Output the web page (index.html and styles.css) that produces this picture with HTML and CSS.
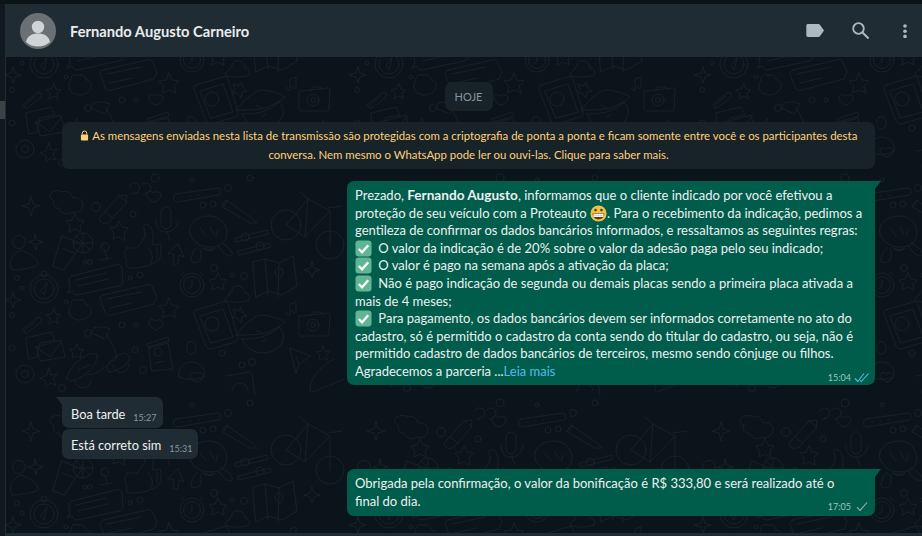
FILE: index.html
```html
<!DOCTYPE html>
<html lang="pt-BR">
<head>
    <meta charset="UTF-8">
    <title>WhatsApp</title>
    <link rel="stylesheet" href="styles.css">
</head>
<body>
    <div class="app">
        <div class="side-strip"><span class="scroll-mark"></span></div>
        <div class="chat">
            <header class="chat-header">
                <svg class="avatar" viewBox="0 0 36 36">
                    <circle cx="18" cy="18" r="18" fill="#6a7175"/>
                    <circle cx="18" cy="14" r="6.200" fill="#cfd4d6"/>
                    <path d="M6 29c1-6 6-8.500 12-8.500S29 23 30 29a18 18 0 0 1-24 0z" fill="#cfd4d6"/>
                </svg>
                <span class="contact-name">Fernando Augusto Carneiro</span>
                <div class="header-icons">
                    <svg class="icon icon-tag" viewBox="0 0 18 13" width="18" height="13"><path d="M2 0h10.500c.6 0 1.100.3 1.400.7L18 6.500l-4.100 5.800c-.3.4-.8.700-1.400.7H2c-1 0-1.700-.7-1.700-1.700V1.700C.3.700 1 0 2 0z" fill="#aebac1"/></svg>
                    <svg class="icon icon-search" viewBox="0 0 17 17" width="17" height="17"><circle cx="6.500" cy="6.500" r="5.300" fill="none" stroke="#aebac1" stroke-width="1.800"/><path d="M10.500 10.500L16.500 16.500" stroke="#aebac1" stroke-width="2" fill="none"/></svg>
                    <svg class="icon" viewBox="0 0 4 14" width="4" height="14"><circle cx="2" cy="2" r="1.800" fill="#aebac1"/><circle cx="2" cy="7.200" r="1.800" fill="#aebac1"/><circle cx="2" cy="12.400" r="1.800" fill="#aebac1"/></svg>
                </div>
            </header>

            <main class="messages">
                <svg class="doodles" width="100%" height="100%">
                    <defs>
                        <pattern id="doodle" x="-6" y="113" width="345" height="225" patternUnits="userSpaceOnUse">
                            <g fill="none" stroke="#162027" stroke-width="1" stroke-linejoin="round" stroke-linecap="round">
                                <!-- cloud, sparkle -->
                                <path d="M52 22c-4 3-2 8 2 8-2 5 1 9 5 8 2 6 9 7 13 4 4 2 11-1 11-7 0-6-6-8-10-7-1-5-6-8-10-6-3-2-8-2-11 0z"/>
                                <path d="M31 27l2 7 7 2-7 2-2 8-2-8-7-2 7-2z"/>
                                <!-- pencil -->
                                <path d="M101 46l18-20 8 6-18 20c-3 2-7 2-9-1-1-2-1-3 1-5zM119 26l8-1-1 7M105 42l8 6"/>
                                <!-- quotes, heart, pill -->
                                <path d="M130 16a5 5 0 1 1 4 7c2 0 0 2-2 1M142 15a5 5 0 1 1 4 8c0 1-1 1-2 1"/>
                                <path d="M154 32c-3-1-7-4-7-7 0-4 4-5 6-2 2-2 8-2 8 2 0 3-4 6-7 7z"/>
                                <path d="M176 24l42-6c3 0 4 6 1 7l-42 7c-4 0-5-7-1-8zM182 27h1M190 26h1M198 25h1"/>
                                <circle cx="96" cy="37" r="4.500"/><circle cx="133" cy="44" r="3"/><circle cx="155" cy="8" r="4"/><circle cx="228" cy="18" r="3.500"/><circle cx="203" cy="35" r="3"/><circle cx="213" cy="34" r="3"/>
                                <!-- mic -->
                                <path d="M161 42a5 5 0 0 1 10 0v12a5 5 0 0 1-10 0zM156 50c0 8 4 12 10 12s11-4 12-11M167 62l3 8"/>
                                <!-- pencil 2 -->
                                <path d="M222 36l4-6 26 18 5 5-7 0-24-14z M228 30l-4 6"/>
                                <!-- stars -->
                                <path d="M75 44l3 6 6 1-4 5 1 6-6-3-6 3 1-6-4-5 6-1z"/>
                                <path d="M119 51l3 6 6 1-4 5 1 7-6-3-6 2 1-6-4-5 6-1z"/>
                                <!-- thumb -->
                                <path d="M127 78h10l5-7c3-3 4-8 2-13-2-4 6-6 8 2 2 6 1 11 0 15l8-1c2 4 1 14-2 17l-11 5-10 2h-9c-2-3-2-6-1-8-3-2-3-8 0-12zM148 78c4 4 6 10 3 15M157 76v13"/>
                                <!-- person -->
                                <circle cx="19" cy="72" r="6.500"/>
                                <path d="M21 80c5 3 16 5 17 14 0 3-16 6-26 6-3-6-2-13 5-18z"/>
                                <path d="M35 64l2 6 6 2-6 2-1 6-2-6-6-2 6-2z"/>
                                <!-- drink -->
                                <path d="M62 66l20 8-18 26-11-4zM62 78l12 5"/><circle cx="83" cy="73" r="10"/><path d="M83 63v20M73 73h20M76 66l14 14"/>
                                <!-- glass -->
                                <circle cx="105" cy="77" r="4"/><path d="M105 81l2 8M100 90l11-2"/>
                                <!-- face -->
                                <path d="M190 57c2-7 11-11 19-11 9 0 15 5 17 12 3 7-1 15-8 18-8 2-16 1-21-3-5-4-9-9-7-16zM200 58l6 8M210 57l4 7M218 60l-2 6"/>
                                <path d="M197 78c-4 2-6 8-6 13 2 3 7 2 9-1 2-4 1-8 0-11M218 75c3 6 8 11 13 11 2-1 1-5-1-7-3-3-6-5-9-6M203 78c4 2 8 2 12 0-1 3-9 4-12 0z"/>
                                <!-- arrow -->
                                <path d="M178 74l6 13-5-2-1 9-5 0 1-10-6 0z"/>
                                <!-- sliders -->
                                <path d="M235 68l32-8 1 4-32 8zM238 81l32-8 1 4-32 8z"/>
                                <circle cx="245" cy="67" r="4"/><circle cx="260" cy="76" r="4"/>
                                <circle cx="250" cy="8" r="3"/><circle cx="214" cy="98" r="3.500"/><circle cx="244" cy="106" r="3.500"/><circle cx="232" cy="105" r="2"/><circle cx="192" cy="10" r="2"/><circle cx="140" cy="105" r="3"/><circle cx="130" cy="108" r="2"/>
                                <circle cx="90" cy="92" r="2.500"/><circle cx="85" cy="92" r="2"/><circle cx="17" cy="108" r="2.500"/><circle cx="22" cy="118" r="2"/><circle cx="12" cy="145" r="2.500"/><circle cx="66" cy="132" r="2"/>
                                <!-- bike -->
                                <circle cx="286" cy="55" r="15"/><circle cx="330" cy="75" r="14"/>
                                <path d="M286 55l22-26 22 12 0 34M308 29l-3 38 25-26M286 55l19 12M300 22l8 7M328 38l14-2"/>
                                <!-- map -->
                                <path d="M253 92l12-3 14 4 14-7 4 30-15 9-14-4-12 6zM265 89l3 36M279 93l-1 34"/><path d="M275 102a4 4 0 0 1 8 0c0 3-4 7-4 7s-4-4-4-7z"/>
                                <!-- chat bubbles -->
                                <path d="M72 106l43-11c4-1 6 0 7 3l1 13c0 3-1 4-4 5l-42 9c-3 0-4-2-5-4l-5 2 3-5c-1-3-1-6-1-8 0-2 1-3 3-4zM76 110l30-7M78 116l30-7"/>
                                <path d="M103 125l44-10c3-1 5 0 6 3l4 9-3 7-42 11c-3 1-6 0-7-3l-5-13c0-2 1-3 3-4zM107 129l34-7M110 138l22-5"/>
                                <!-- compass -->
                                <circle cx="44" cy="119" r="14"/><circle cx="44" cy="119" r="10"/><circle cx="44" cy="104" r="3"/><path d="M47 113l-3 12-3-4z"/>
                                <!-- sparkle, clock, cloud -->
                                <path d="M13 122l2 6 6 2-6 2-2 6-2-6-7-2 7-2z"/>
                                <circle cx="192" cy="115" r="12"/><circle cx="192" cy="115" r="8.500"/><path d="M192 110v6l-3 3M184 102l-3 3M200 102l3 3"/>
                                <path d="M229 125c-5 3-5 6-1 6 3 2 18 1 21-1 2-4-1-7-4-7 0-4-4-8-9-7-3 0-4 3-4 5-1 0-2 2-3 4z"/>
                                <path d="M169 128l3 7 7 1-5 5 2 7-7-3-7 3 2-7-5-5 7-1z" />
                                <path d="M218 103l3 6 6 1-4 4 1 6-6-3-6 3 1-6-4-4 6-1z"/>
                                <path d="M312 92l2 6 6 2-6 2-2 6-2-6-6-2 6-2z"/>
                                <path d="M78 130c-5-2-8 2-7 6-4 2-2 12 4 13 6 3 14-1 16-6 2-5-2-8-5-8 0-3-3-6-8-5z"/>
                                <!-- phone -->
                                <path d="M196 140l27-8c2-1 4 0 5 2l10 33c0 2-1 4-3 5l-24 7c-2 0-4-1-5-3l-12-32c0-2 0-3 2-4zM200 146l23-7 10 28-22 6z"/>
                                <circle cx="212" cy="154" r="7"/>
                                <!-- lips -->
                                <path d="M236 165c6-7 13-16 24-20 9 0 19 3 25 7-6 6-12 7-16 10-8 3-22 3-33 3zM242 169c10 0 24 0 37-12 8 8 5 20-9 25-10 3-23-1-28-13zM256 160l6 3M262 172l4-3"/>
                                <!-- note, star, camera -->
                                <path d="M290 143l0-9 6-2 0 9M290 142a2 2 0 1 1-3 0M296 140a2 2 0 1 1-3 0"/>
                                <path d="M241 138l2 5 4 3-5 1-1 6-4-5-5 0 3-4-2-5 5 2z"/>
                                <path d="M302 146l26-3c2 0 2 1 2 3l-1 17c0 2-1 3-3 3l-24 0c-2 0-3-1-3-3l0-17zM310 146l3-4h8l2 3"/><circle cx="313" cy="155" r="6"/><circle cx="313" cy="155" r="2.500"/>
                                <!-- paperclip, stars -->
                                <path d="M22 160l15-12c4-2 6 2 3 5l-13 10c-3 1-4-1-2-3l10-8"/>
                                <path d="M54 139l2 5 5 1-4 3 1 6-4-3-5 3 1-6-4-3 5-1z"/>
                                <!-- envelope -->
                                <path d="M26 168l25-6 4 8-15 3-3 14-8 2zM36 177l25-7 4 17-24 4zM36 177l14 10 12-16"/>
                                <!-- scooter -->
                                <path d="M94 158l-3 5 14 6 5-10-6-2zM106 163c6 10 9 17 11 25l-20 15-10 2M67 208c2-10 10-18 22-24l8 0c1 10-8 20-22 26-3 2-7 1-8-2zM78 200l12-5"/>
                                <path d="M107 198c1-8 10-14 19-15l4 5c-2 7-12 13-21 14zM113 195a8 8 0 1 0 16-1"/><path d="M75 210a8 8 0 0 0 16 0"/>
                                <!-- jar, heart -->
                                <path d="M149 178l19-5 5 26-21 2zM147 174l21-7 1 4-21 6z"/><circle cx="158" cy="182" r="4"/><path d="M155 193l9-2"/>
                                <path d="M156 160c-3-1-7-4-7-7 0-4 4-5 6-2 2-2 8-2 8 2 0 3-4 6-7 7z"/>
                                <!-- head, heart -->
                                <path d="M189 172c4-2 7 2 7 6 0 4-3 7-6 6-3-1-5-9-1-12z"/>
                                <path d="M179 207c-2-9 5-15 13-15s14 7 12 15c-7 3-18 3-25 0z"/><path d="M197 212c-3-1-7-3-7-6 0-4 4-4 6-2 2-2 7-2 7 2 0 3-3 5-6 6z"/>
                                <!-- gear, star -->
                                <circle cx="25" cy="204" r="9"/><circle cx="25" cy="204" r="3.500"/>
                                <path d="M49 198l2 7 6-1-4 5 3 6-6-2-4 4 0-6-6-3 6-2z"/>
                                <path d="M77 174l2 5 5 1-4 3 1 5-4-2-5 2 1-5-4-3 5-1z"/>
                                <path d="M290 178l21 8-12 8-3 9zM299 194l-3-7"/>
                                <path d="M323 176l2 5 5 1-4 3 1 5-4-2-4 2 1-5-4-3 5-1z"/>
                                <path d="M310 222c-1-14 10-25 24-33M330 215l15-6M312 222l16-6"/>
                                <path d="M226 206l23-4c2 0 2 2 3 3l3 20M232 222a8 8 0 0 1 16-2"/>
                                <circle cx="252" cy="192" r="3.500"/><circle cx="222" cy="183" r="3"/><circle cx="242" cy="195" r="3"/><circle cx="143" cy="200" r="3.500"/><circle cx="135" cy="180" r="3"/><circle cx="88" cy="163" r="3.500"/><circle cx="122" cy="155" r="3"/><circle cx="136" cy="155" r="2"/><circle cx="12" cy="178" r="3"/><circle cx="62" cy="218" r="3.500"/>
                            </g>
                        </pattern>
                    </defs>
                    <rect width="100%" height="100%" fill="url(#doodle)"/>
                </svg>

                <div class="date-row"><span class="date-chip">HOJE</span></div>

                <div class="notice">
                    <svg class="lock" viewBox="0 0 10 12" width="9" height="11"><path d="M2.500 5V3.500a2.500 2.500 0 0 1 5 0V5" fill="none" stroke="#ffd279" stroke-width="1.100"/><rect x="1" y="5" width="8" height="6.500" rx="1" fill="#ffd279"/></svg>
                    As mensagens enviadas nesta lista de transmissão são protegidas com a criptografia de ponta a ponta e ficam somente entre você e os participantes desta<br>
                    conversa. Nem mesmo o WhatsApp pode ler ou ouvi-las. Clique para saber mais.
                </div>

                <div class="bubble bubble-out tail-out first-out">
                    <div class="bubble-text">
                        Prezado, <strong>Fernando Augusto</strong>, informamos que o cliente indicado por você efetivou a<br>
                        proteção de seu veículo com a Proteauto <svg class="emoji emoji-face" viewBox="0 0 20 20"><circle cx="10" cy="10" r="9.500" fill="#f0c24a"/><circle cx="6.500" cy="6" r="1.500" fill="#4d3a12"/><circle cx="13.500" cy="6" r="1.500" fill="#4d3a12"/><path d="M3 10h14c0 4-3 7-7 7s-7-3-7-7z" fill="#5b3a14"/><path d="M4 10.500h12v3.600H4z" fill="#fff"/><path d="M4 12.300h12M7 10.500v3.600M10 10.500v3.600M13 10.500v3.600" stroke="#b9a98a" stroke-width=".5"/></svg>. Para o recebimento da indicação, pedimos a<br>
                        gentileza de confirmar os dados bancários informados, e ressaltamos as seguintes regras:<br>
                        <svg class="emoji"><use href="#check-box"/></svg> O valor da indicação é de 20% sobre o valor da adesão paga pelo seu indicado;<br>
                        <svg class="emoji"><use href="#check-box"/></svg> O valor é pago na semana após a ativação da placa;<br>
                        <svg class="emoji"><use href="#check-box"/></svg> Não é pago indicação de segunda ou demais placas sendo a primeira placa ativada a<br>
                        mais de 4 meses;<br>
                        <svg class="emoji"><use href="#check-box"/></svg> Para pagamento, os dados bancários devem ser informados corretamente no ato do<br>
                        cadastro, só é permitido o cadastro da conta sendo do titular do cadastro, ou seja, não é<br>
                        permitido cadastro de dados bancários de terceiros, mesmo sendo cônjuge ou filhos.<br>
                        Agradecemos a parceria ...<a class="read-more" href="#">Leia mais</a>
                    </div>
                    <div class="meta">
                        <span>15:04</span>
                        <svg viewBox="0 0 16 11" width="16" height="11"><path d="M1 6.500l2.800 3L10 1.500M6.300 8.500l1 1L14.500 1.500" fill="none" stroke="#53bdeb" stroke-width="1.100"/></svg>
                    </div>
                </div>

                <div class="bubble bubble-in tail-in first-in">
                    <span>Boa tarde</span><span class="time-in">15:27</span>
                </div>
                <div class="bubble bubble-in second-in">
                    <span>Está correto sim</span><span class="time-in">15:31</span>
                </div>

                <div class="bubble bubble-out tail-out last-out">
                    <div class="bubble-text">
                        Obrigada pela confirmação, o valor da bonificação é R$ 333,80 e será realizado até o<br>
                        final do dia.
                    </div>
                    <div class="meta">
                        <span>17:05</span>
                        <svg viewBox="0 0 16 11" width="16" height="11"><path d="M3 6l3 3.500L13 1.500" fill="none" stroke="#9db5ad" stroke-width="1.100"/></svg>
                    </div>
                </div>
            </main>
            <div class="footer-edge"></div>
        </div>
    </div>

    <svg class="sprite" width="0" height="0">
        <symbol id="check-box" viewBox="0 0 18 18">
            <rect x=".5" y=".5" width="17" height="17" rx="3.500" fill="#62b594"/>
            <path d="M4 9.500l3.500 3.500L14 5.500" fill="none" stroke="#fff" stroke-width="2.400"/>
        </symbol>
    </svg>
</body>
</html>
```

FILE: styles.css
```css
* {
    box-sizing: border-box;
}

html, body {
    margin: 0;
    height: 100%;
    overflow: hidden;
}

body {
    font-family: 'Lato', 'Open Sans', sans-serif;
    background-color: #0b1418;
    color: #eef1f2;
    font-size: 13px;
}

.sprite {
    display: block;
}

.app {
    display: flex;
    height: 536px;
    padding-top: 4px;
}

.side-strip {
    width: 6px;
    flex-shrink: 0;
    padding-top: 97px;
    background-color: #10191f;
    border-right: 1px solid #222d33;
}

.scroll-mark {
    display: block;
    width: 5px;
    height: 18px;
    background-color: #3b4347;
}

.chat {
    flex: 1;
    display: flex;
    flex-direction: column;
    min-width: 0;
}

.chat-header {
    height: 53px;
    flex-shrink: 0;
    display: flex;
    align-items: center;
    padding: 0 15px 0 14px;
    background-color: #202c33;
}

.avatar {
    width: 36px;
    height: 36px;
    flex-shrink: 0;
}

.contact-name {
    margin-left: 14px;
    font-size: 14.700px;
    font-weight: 700;
    color: #e9edef;
}

.header-icons {
    margin-left: auto;
    display: flex;
    align-items: center;
}

.icon-tag {
    margin-right: 28px;
}

.icon-search {
    margin-right: 34px;
}

.messages {
    position: relative;
    flex: 1;
    display: flex;
    flex-direction: column;
    padding: 25px 47px 0 56px;
    background-color: #0b141a;
}

.doodles {
    position: absolute;
    top: 0;
    left: 0;
}

.date-row,
.notice,
.bubble {
    position: relative;
}

.date-row {
    display: flex;
    justify-content: center;
    height: 29px;
}

.date-chip {
    width: 48px;
    display: flex;
    align-items: center;
    justify-content: center;
    border-radius: 7px;
    background-color: #182229;
    color: #8696a0;
    font-size: 11px;
}

.notice {
    margin-top: 11px;
    height: 47px;
    padding-top: 5px;
    border-radius: 7px;
    background-color: #182229;
    color: #ffd279;
    font-size: 11.420px;
    line-height: 18.500px;
    text-align: center;
    white-space: nowrap;
}

.lock {
    vertical-align: -1px;
    margin-right: 1px;
}

.bubble {
    border-radius: 7px;
    white-space: nowrap;
}

.bubble-out {
    align-self: flex-end;
    width: 528px;
    padding: 6px 8px 0;
    background-color: #005c4b;
}

.first-out {
    margin-top: 12px;
    height: 204px;
}

.last-out {
    margin-top: 10px;
    height: 47px;
}

.bubble-text {
    line-height: 17.600px;
}

.bubble-text strong {
    font-size: 13.600px;
    font-weight: 700;
}

.emoji {
    width: 17px;
    height: 17px;
    margin-right: 3px;
    vertical-align: -4px;
}

.emoji-face {
    margin-right: 0;
}

.read-more {
    color: #53bdeb;
    text-decoration: none;
}

.meta {
    display: flex;
    justify-content: flex-end;
    align-items: center;
    gap: 3px;
    margin-top: -9px;
    margin-right: -3px;
    font-size: 9px;
    color: #a3c4bb;
}

.bubble-in {
    align-self: flex-start;
    display: flex;
    align-items: flex-end;
    height: 30px;
    padding: 0 6px 5px 9px;
    background-color: #202c33;
}

.bubble-in span:first-child {
    font-size: 12.800px;
    line-height: 20px;
    margin-bottom: -1px;
}

.first-in {
    margin-top: 12px;
    height: 31px;
}

.second-in {
    margin-top: 1px;
}

.time-in {
    margin-left: 8px;
    font-size: 9px;
    color: #8696a0;
}

.tail-out::after,
.tail-in::before {
    content: "";
    position: absolute;
    top: 0;
    width: 0;
    height: 0;
    border-top: 8px solid;
}

.tail-out {
    border-top-right-radius: 0;
}

.tail-out::after {
    left: 100%;
    border-top-color: #005c4b;
    border-right: 6px solid transparent;
}

.tail-in {
    border-top-left-radius: 0;
}

.tail-in::before {
    right: 100%;
    border-top-color: #202c33;
    border-left: 6px solid transparent;
}

.footer-edge {
    height: 3px;
    flex-shrink: 0;
    background-color: #202c33;
}
```
